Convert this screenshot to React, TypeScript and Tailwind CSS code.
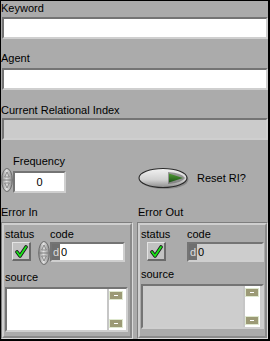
import React from "react";

const Sunken = ({ className = "", children }: { className?: string; children?: React.ReactNode }) => (
  <div
    className={`border-t-2 border-l-2 border-b-2 border-r-2 border-t-[#747474] border-l-[#747474] border-b-[#cfcfcf] border-r-[#cfcfcf] ${className}`}
  >
    {children}
  </div>
);

const Spinner = () => (
  <svg width="12" height="24" viewBox="0 0 12 24" className="shrink-0">
    <defs>
      <linearGradient id="spg" x1="0" y1="0" x2="1" y2="0">
        <stop offset="0" stopColor="#8a8a8a" />
        <stop offset="0.45" stopColor="#e2e2e2" />
        <stop offset="1" stopColor="#8a8a8a" />
      </linearGradient>
    </defs>
    <ellipse cx="6" cy="12" rx="5.3" ry="11.5" fill="url(#spg)" stroke="#6c6c6c" />
    <line x1="1.2" y1="12" x2="10.8" y2="12" stroke="#7a7a7a" />
    <path d="M6 4 L8.3 9 H3.7 Z" fill="#d8d8d8" stroke="#6a6a6a" strokeWidth="0.7" />
    <path d="M6 20 L8.3 15 H3.7 Z" fill="#d8d8d8" stroke="#6a6a6a" strokeWidth="0.7" />
  </svg>
);

const CheckButton = () => (
  <div className="w-[19px] h-[19px] border-t border-l border-b-2 border-r-2 border-t-[#e4e4e4] border-l-[#e4e4e4] border-b-[#6a6a6a] border-r-[#6a6a6a] bg-[#c2c2c2] flex items-center justify-center">
    <svg width="13" height="13" viewBox="0 0 13 13">
      <path d="M2 7 L5 11 L11 2" fill="none" stroke="#1a1a1a" strokeWidth="3.6" strokeLinecap="round" strokeLinejoin="round" />
      <path d="M2 7 L5 11 L11 2" fill="none" stroke="#19e619" strokeWidth="1.8" strokeLinecap="round" strokeLinejoin="round" />
    </svg>
  </div>
);

const ResetOval = () => (
  <svg width="52" height="23" viewBox="0 0 52 23" className="shrink-0">
    <defs>
      <linearGradient id="ovg" x1="0" y1="0" x2="0" y2="1">
        <stop offset="0" stopColor="#f2f2f2" />
        <stop offset="0.6" stopColor="#d0d0d0" />
        <stop offset="1" stopColor="#8c8c8c" />
      </linearGradient>
      <linearGradient id="grg" x1="0" y1="0" x2="0" y2="1">
        <stop offset="0" stopColor="#4f9a33" />
        <stop offset="1" stopColor="#1d5418" />
      </linearGradient>
    </defs>
    <ellipse cx="26.5" cy="12.5" rx="24" ry="9.5" fill="#6e6e6e" opacity="0.55" />
    <ellipse cx="25" cy="11" rx="24" ry="9.5" fill="url(#ovg)" stroke="#2a2a2a" strokeWidth="1.1" />
    <path d="M30 5 Q44 6 47 11 Q44 16 30 17 Z" fill="#5a5a5a" opacity="0.55" />
    <path d="M31 6.5 L45 11 L31 15.5 Z" fill="url(#grg)" />
  </svg>
);

const ScrollBtn = () => (
  <div className="w-[14px] h-[9px] bg-[#9c9a76] border border-[#dfe8cf] flex items-center justify-center">
    <div className="w-[4px] h-[1px] bg-white" />
  </div>
);

const SourceBox = ({ fill }: { fill: string }) => (
  <Sunken className={`w-[123px] h-[45px] flex ${fill}`}>
    <div className="flex-1" />
    <div className="w-[19px] flex">
      <div className="w-[2px] bg-[#c6c6c6]" />
      <div className="flex-1 bg-white flex flex-col justify-between py-[2px]">
        <ScrollBtn />
        <ScrollBtn />
      </div>
      <div className="w-[2px]" />
    </div>
  </Sunken>
);

const CodeBox = ({ w, fill }: { w: string; fill: string }) => (
  <Sunken className={`${w} h-[20px] flex ${fill}`}>
    <div className="w-[8px] bg-[#6f6f6f] text-[#dcdcdc] flex items-center justify-center">d</div>
    <div className="flex items-center pl-[1px]">0</div>
  </Sunken>
);

const Cluster = ({ children }: { children: React.ReactNode }) => (
  <div className="flex-1 border-t border-l border-b border-r border-t-[#7e7e7e] border-l-[#7e7e7e] border-b-[#dadada] border-r-[#dadada]">
    <div className="h-full border-2 border-t-[#cfcfcf] border-l-[#cfcfcf] border-b-[#8a8a8a] border-r-[#8a8a8a] flex flex-col pt-[3px] pl-[1px]">
      {children}
    </div>
  </div>
);

export default function App() {
  return (
    <div className="w-[270px] h-[341px] bg-[#ababab] border-t border-l border-r-2 border-b-2 border-black flex flex-col text-[11px] leading-[13px] text-black font-['Liberation_Sans',Arial,sans-serif] overflow-hidden">
      <div className="mt-[1px]">Keyword</div>
      <Sunken className="mt-[2px] ml-[1px] h-[22px] bg-white" />
      <div className="mt-[13px]">Agent</div>
      <Sunken className="mt-[3px] ml-[1px] h-[22px] bg-white" />
      <div className="mt-[14px]">Current Relational Index</div>
      <Sunken className="mt-[1px] ml-[1px] h-[22px] bg-[#cbcbcb]" />

      <div className="mt-[15px] flex items-start h-[38px]">
        <div className="flex flex-col w-[66px]">
          <div className="pl-[11px] w-[65px] text-center">Frequency</div>
          <div className="flex items-start">
            <Spinner />
            <Sunken className="mt-[3px] w-[53px] h-[22px] bg-white flex items-center justify-center">0</Sunken>
          </div>
        </div>
        <div className="ml-[71px] mt-[12px] flex items-center">
          <ResetOval />
          <div className="ml-[7px] -mt-[1px]">Reset RI?</div>
        </div>
      </div>

      <div className="mt-[13px] flex flex-1 min-h-0">
        <div className="w-[132px] flex flex-col">
          <div>Error In</div>
          <div className="mt-[3px] flex-1 flex">
            <Cluster>
              <div className="flex items-start">
                <div className="w-[33px] flex flex-col">
                  <div>status</div>
                  <div className="ml-[7px] mt-[1px]">
                    <CheckButton />
                  </div>
                </div>
                <div className="flex flex-col">
                  <div className="ml-[12px]">code</div>
                  <div className="flex items-start">
                    <Spinner />
                    <div className="mt-[1px]">
                      <CodeBox w="w-[75px]" fill="bg-white" />
                    </div>
                  </div>
                </div>
              </div>
              <div className="mt-[6px]">source</div>
              <div className="mt-[3px]">
                <SourceBox fill="bg-white" />
              </div>
            </Cluster>
          </div>
        </div>
        <div className="ml-[4px] flex-1 flex flex-col">
          <div className="pl-[1px]">Error Out</div>
          <div className="mt-[3px] flex-1 flex">
            <Cluster>
              <div className="flex items-start">
                <div className="w-[46px] flex flex-col">
                  <div>status</div>
                  <div className="ml-[6px] mt-[1px]">
                    <CheckButton />
                  </div>
                </div>
                <div className="flex flex-col">
                  <div>code</div>
                  <div className="mt-[1px]">
                    <CodeBox w="w-[77px]" fill="bg-[#cdcdcd]" />
                  </div>
                </div>
              </div>
              <div className="mt-[6px]">source</div>
              <div className="mt-[3px]">
                <SourceBox fill="bg-[#cdcdcd]" />
              </div>
            </Cluster>
          </div>
        </div>
      </div>
    </div>
  );
}
